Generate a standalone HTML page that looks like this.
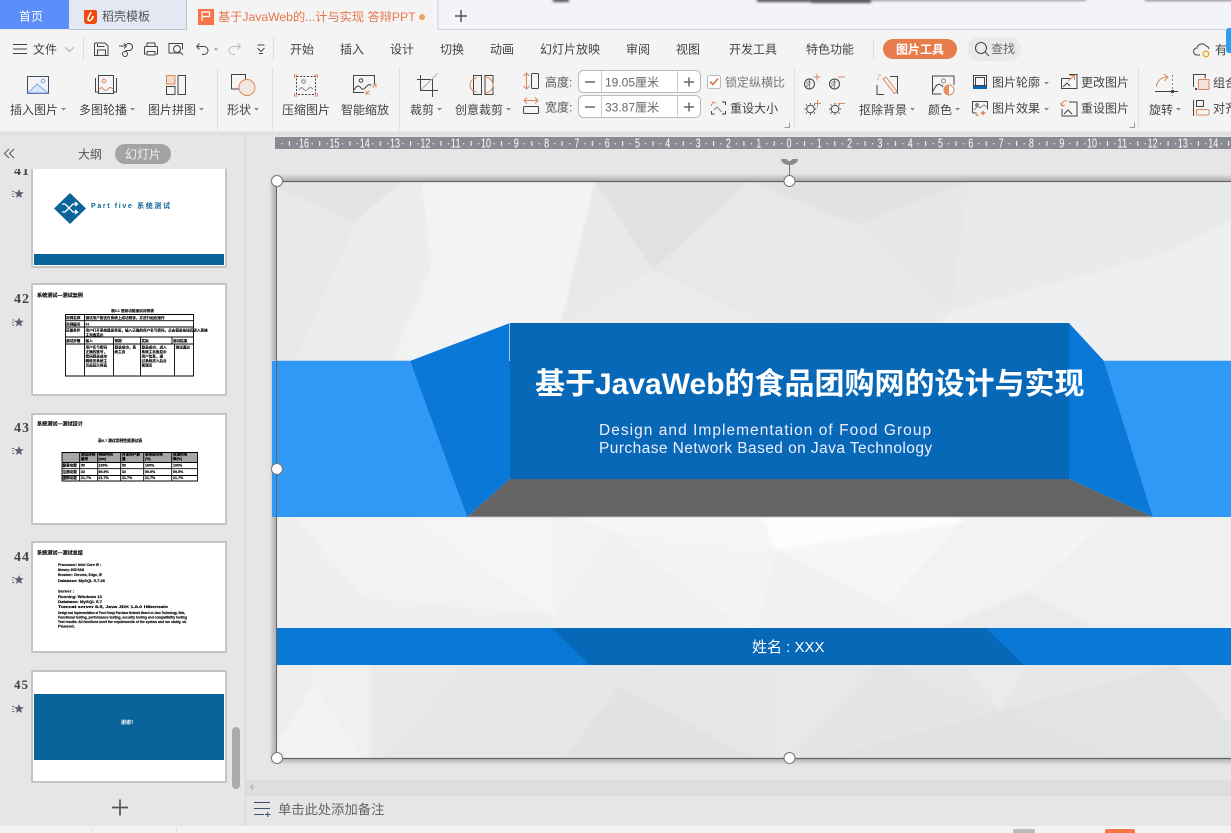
<!DOCTYPE html>
<html><head><meta charset="utf-8"><style>
html,body{margin:0;padding:0;background:#e6e6e6;overflow:hidden;width:1231px;height:833px}
svg{display:block;position:absolute;left:0;top:0}
text{font-family:"Liberation Sans","Noto Sans CJK SC",sans-serif;font-size:12px;fill:#444}
.k{stroke:#444;stroke-width:1;fill:none}
.o{stroke:#d98a5c;stroke-width:1;fill:none}
.g{stroke:#888;stroke-width:1;fill:none}
text.tb{fill:#000;font-size:3.600px;font-weight:bold;stroke:#000;stroke-width:.12}
text.th{fill:#000;font-size:5.100px;font-weight:bold;stroke:#000;stroke-width:.12}
text.t4{fill:#000;font-size:3.600px;font-weight:bold;stroke:#000;stroke-width:.15}
text.rn{fill:#fff;font-size:12.500px;text-anchor:middle}
text.num{font-family:"Liberation Serif",serif;font-size:14px;font-weight:bold;fill:#444;letter-spacing:1px}
.bl{stroke:#000;fill:none;stroke-width:.9}
</style></head><body>
<svg width="1231" height="833" viewBox="0 0 1231 833" xmlns="http://www.w3.org/2000/svg">
<defs>
<pattern id="tick" x="789" y="137" width="30.3" height="12" patternUnits="userSpaceOnUse">
<rect x="15" y="4" width="1" height="5" fill="#fff"/><rect x="7.500" y="6" width="1" height="1.400" fill="#fff"/><rect x="22.500" y="6" width="1" height="1.400" fill="#fff"/>
</pattern>
<filter id="bl" x="-20%" y="-100%" width="140%" height="300%"><feGaussianBlur stdDeviation="1.400"/></filter>
<filter id="bs" x="-5%" y="-5%" width="110%" height="110%"><feGaussianBlur stdDeviation="2"/></filter>
<filter id="soft" x="-2%" y="-2%" width="104%" height="104%"><feGaussianBlur stdDeviation="1.200"/></filter>
<clipPath id="side"><rect x="0" y="169" width="245" height="620"/></clipPath>
<clipPath id="sl"><rect x="276" y="181" width="955" height="577"/></clipPath>
</defs>

<!-- base -->
<rect width="1231" height="833" fill="#e6e6e6"/>
<!-- top chrome -->
<rect width="1231" height="29" fill="#f3f4f9"/>
<g filter="url(#bl)" fill="#555">
<rect x="553" y="-2" width="16" height="4"/><rect x="757" y="-2" width="70" height="4"/><rect x="811" y="-2" width="60" height="5"/><rect x="871" y="-2" width="215" height="3" fill="#999"/><rect x="1145" y="-2" width="90" height="3" fill="#888"/><rect x="280" y="-2" width="16" height="3" fill="#aaa"/>
</g>
<rect x="0" y="0" width="69" height="29" fill="#5b8ef8"/>
<rect x="69" y="0" width="117" height="29" fill="#e3e8f3"/>
<rect x="186" y="0" width="1" height="29" fill="#bcc2d4"/>
<rect x="187" y="0" width="251" height="30" fill="#f4f4f4"/>
<rect x="437.500" y="0" width="1" height="29" fill="#c9cde0"/>
<rect x="438" y="29" width="793" height="1" fill="#cfd2e2"/>
<rect x="69" y="29" width="118" height="1" fill="#bcc2d4"/>
<rect x="0" y="29" width="69" height="1" fill="#e8e8f0"/>
<text x="19" y="20.500" style="fill:#fff">首页</text>
<path d="M84 10h11a2 2 0 0 1 2 2v9a3 3 0 0 1-3 3h-7a3 3 0 0 1-3-3z" fill="#f04a0c"/>
<path d="M91 12c-1 3-3 5-3 7 0 2 2 2 3 1 1-1 2-3 2-4" stroke="#fff" stroke-width="1.500" fill="none"/>
<text x="102" y="20.500" style="fill:#555">稻壳模板</text>
<rect x="198" y="9" width="16" height="16" fill="#f8734b"/>
<path d="M202 21v-9h7.500v4.500h-7.500" stroke="#fff" stroke-width="1.200" fill="none"/>
<text x="218" y="21" style="fill:#e8764c;font-size:12.200px">基于JavaWeb的...计与实现 答辩PPT</text>
<circle cx="422" cy="17" r="3" fill="#eda260"/>
<path d="M461 10v12M455 16h12" stroke="#555" stroke-width="1.500"/>

<!-- ribbon -->
<rect x="0" y="30" width="1231" height="102" fill="#f4f4f4"/>
<rect x="0" y="132" width="1231" height="3" fill="#dcdcdc" filter="url(#bl)"/>
<rect x="0" y="826" width="1231" height="7" fill="#f3f3f3"/>

<!-- quick bar -->
<path d="M13 44.500h14M13 49h14M13 53.500h14" stroke="#444" stroke-width="1"/>
<text x="33" y="53.500">文件</text>
<path d="M65 47l4.500 4.500L74 47" class="g" style="stroke:#aaa"/>
<rect x="83" y="37" width="1" height="24" fill="#ddd"/>
<path d="M95 43h10l3 3v9.500H94.500V44z" class="k"/><path d="M97.500 55v-5h8v5M97.500 44v2.500h7" class="k"/>
<path d="M119 46h5l3 -2M124 43.500l2.500 2.500-2.500 2.500M127 43.500h2a3.500 3.500 0 0 1 0 7h-3v1.500" class="k"/><circle cx="125" cy="54" r="2.500" class="k"/>
<path d="M147 47v-4h8v4M146 54h-1.500v-6.500a1 1 0 0 1 1-1h11a1 1 0 0 1 1 1V54H156" class="k"/><rect x="147" y="51.500" width="8" height="3.500" class="k"/>
<path d="M180 53h-11V43.500h13.500v6" class="k"/><circle cx="177" cy="49" r="3.500" class="k"/><path d="M179.500 51.500l3.500 3.500" class="k"/>
<path d="M196.500 46.500l3-3M196.500 46.500l3 3M197 46.500h7a4 4 0 0 1 0 8h-2" class="k"/>
<path d="M214 48.500h4l-2 2z" fill="#888"/>
<path d="M240.500 46.500l-3-3M240.500 46.500l-3 3M240 46.500h-7a4 4 0 0 0 0 8h2" class="g" style="stroke:#bbb"/>
<path d="M257.500 45h7M257.500 48l3.500 3.500 3.500-3.500M259 53.500h4" class="k"/>
<rect x="273" y="37" width="1" height="24" fill="#ddd"/>
<text x="290" y="53.500">开始</text><text x="340" y="53.500">插入</text><text x="390" y="53.500">设计</text><text x="440" y="53.500">切换</text><text x="490" y="53.500">动画</text><text x="540" y="53.500">幻灯片放映</text><text x="626" y="53.500">审阅</text><text x="676" y="53.500">视图</text><text x="729" y="53.500">开发工具</text><text x="806" y="53.500">特色功能</text>
<rect x="873" y="39" width="1" height="20" fill="#ddd"/>
<rect x="883" y="39" width="74" height="20" rx="10" fill="#e97c4b"/>
<text x="896" y="53.500" style="fill:#fff;font-weight:bold">图片工具</text>
<rect x="967" y="37" width="54" height="24" rx="12" fill="#e9eaec"/>
<circle cx="981" cy="48" r="5.500" class="k"/><path d="M985 52l4 4" class="k"/>
<text x="991" y="53" style="fill:#666">查找</text>
<path d="M1200 55h-3a3.500 3.500 0 0 1 0-7 5 5 0 0 1 9-2 4 4 0 0 1 3 3" class="k"/>
<circle cx="1206" cy="54" r="2.800" fill="none" stroke="#f0a818" stroke-width="1.300"/>
<text x="1215" y="54">有</text>
<rect x="1226" y="28" width="8" height="25" rx="3" fill="#2a9df4"/>

<!-- ribbon dividers -->
<g fill="#e0e0e0"><rect x="217" y="68" width="1" height="62"/><rect x="272" y="68" width="1" height="62"/><rect x="399" y="68" width="1" height="62"/><rect x="794" y="68" width="1" height="62"/><rect x="1138" y="68" width="1" height="62"/></g>

<!-- 插入图片 -->
<rect x="27.500" y="76.500" width="21" height="17" fill="#fff" class="k" style="stroke:#3e4e6e"/>
<path d="M28 93l9-9 11 9z" fill="#d8e6fa" stroke="#7fa6e6"/><circle cx="43" cy="81" r="1.800" fill="none" stroke="#7fa6e6"/>
<!-- 多图轮播 -->
<rect x="98.500" y="75.500" width="15" height="18" class="k"/><path d="M95.500 78v14h3M116.500 78v14h-3" class="k"/><circle cx="104" cy="81" r="1.800" class="o"/><path d="M99 90c2-3 3-3 4.500-1s3 2 4.500 0 3-2 5 0" class="o"/>
<!-- 拼图 -->
<rect x="166.500" y="75.500" width="8.500" height="8.500" fill="#f0dccd" stroke="#d98a5c"/><rect x="166.500" y="86.500" width="8.500" height="8" class="k"/><rect x="178" y="75.500" width="7.500" height="19" class="k"/>
<!-- 形状 -->
<rect x="231.500" y="74.500" width="14" height="14.500" class="k"/><circle cx="247" cy="87.500" r="8" fill="#f3e7df" stroke="#d98a5c"/>
<!-- 压缩 -->
<rect x="296.500" y="76.500" width="19" height="18" class="k" stroke-dasharray="2 1.500"/>
<path d="M294.500 78v-3h3M314.500 75h3v3M294.500 93v3h3M314.500 96h3v-3" class="o"/>
<circle cx="303.500" cy="81.500" r="1.800" class="g"/><path d="M299 90c2-3 3-3 4.500-1s3 2 4.500 0 3-2 5 0" class="g"/>
<!-- 智能缩放 -->
<path d="M364 92.500h-10.500v-17h21v8" class="k"/><circle cx="361" cy="80.500" r="1.800" class="k"/><path d="M354 90c3-5 5-5 7-2s4 0 6-2 3-2 4 0" class="k"/><path d="M366 94l3.500-3.500M366 90.500V94h3.500M376 84l-3.500 3.500M376 87.500V84h-3.500" class="o"/>
<!-- 裁剪 -->
<path d="M417 79.500h15.500V97M420.500 75v15.500H438" class="k"/><path d="M421 90l17-17" class="g" style="stroke:#aaa"/>
<!-- 创意裁剪 -->
<rect x="473.500" y="75.500" width="8" height="19" class="k"/><rect x="485" y="75.500" width="8" height="19" class="k"/><path d="M477 78a7 7 0 0 0 0 14M485 77a8 8 0 0 1 0 16" class="o"/>
<!-- 高度 -->
<path d="M526.500 73v16M523.500 76l3-3 3 3M523.500 86l3 3 3-3" class="o"/><rect x="531.500" y="73.500" width="7" height="15" rx="1" class="k"/>
<text x="545" y="86.500" style="fill:#555">高度:</text>
<path d="M524 100.500h14M527 97.500l-3 3 3 3M535 97.500l3 3-3 3" class="o"/><rect x="523.500" y="106.500" width="15" height="7" rx="1" class="k"/>
<text x="545" y="111.500" style="fill:#555">宽度:</text>
<!-- inputs -->
<g fill="#fff" stroke="#bbb"><rect x="578.500" y="70.500" width="122" height="22" rx="5"/><rect x="578.500" y="95.500" width="122" height="22" rx="5"/></g>
<path d="M601.500 71v21M677.500 71v21M601.500 96v21M677.500 96v21" stroke="#ccc"/>
<path d="M585 82h10M684 82h10M689 77.500v9M585 107h10M684 107h10M689 102.500v9" stroke="#666" stroke-width="1.500"/>
<text x="605" y="86.500" style="fill:#666">19.05厘米</text><text x="605" y="111.500" style="fill:#666">33.87厘米</text>
<!-- lock -->
<rect x="707.500" y="75.500" width="13" height="13" rx="2" fill="#fff" stroke="#bbb"/><path d="M710 81.500l3 3 5-6" stroke="#d4753e" stroke-width="1.600" fill="none"/>
<text x="725" y="86.500" style="fill:#777">锁定纵横比</text>
<!-- reset -->
<path d="M711.500 111v3h3M722 114h3.500v-3M725.500 105v-3H722" class="k"/><path d="M711 106l2-4 3 1M714 112" class="o"/><path d="M714 110l3-3 2 2 3 3" class="g"/>
<text x="730" y="112.500">重设大小</text>
<path d="M784.500 127.500h5v-5" class="g" style="stroke:#999"/>
<!-- brightness / contrast -->
<circle cx="809.500" cy="84" r="5" class="k"/><path d="M809.500 79.500v9M806 87l5-5M806 84l3-3" class="k" style="stroke:#888"/><path d="M817 73.500v7M813.500 77h7" class="o"/>
<circle cx="834.500" cy="84" r="5" class="k"/><path d="M834.500 79.500v9M831 87l5-5M831 84l3-3" class="k" style="stroke:#888"/><path d="M838 77h7" class="o"/>
<circle cx="810.500" cy="109" r="3.800" class="k"/><path d="M810.500 103v1.500M810.500 113.500v1.500M804.500 109h1.500M815 109h1.500M806 104.500l1 1M814 112.500l1 1M806 113.500l1-1M814 105.500l1-1" class="k"/><path d="M817.500 100v7M814 103.500h7" class="o"/>
<circle cx="835" cy="109" r="3.800" class="k"/><path d="M835 103v1.500M835 113.500v1.500M829 109h1.500M839.500 109h1.500M830.500 104.500l1 1M838.500 112.500l1 1M830.500 113.500l1-1M838.500 105.500l1-1" class="k"/><path d="M838 103.500h7" class="o"/>
<!-- 抠除背景 -->
<path d="M877 85v9.500h7M890 76.500h7.500V94" class="k"/><path d="M883 79l3-2 11 14.500-2.500 2z" class="o"/><path d="M878 76l1 1M880 74v2M877 79h2" class="g" style="stroke:#aaa"/>
<text x="859" y="114">抠除背景</text><text x="928" y="114">颜色</text>
<!-- 颜色 -->
<path d="M944 76H932.500v18h9M944 76h10v9" class="k"/><circle cx="943.500" cy="81" r="2" class="k" style="stroke:#888"/><path d="M933 91c3-6 5-8 8-6l2 2" class="k"/><circle cx="949" cy="90" r="5" fill="#fff" stroke="#d98a5c"/><path d="M949 85a5 5 0 0 0 0 10z" fill="#e48f61"/>
<!-- 图片轮廓 -->
<rect x="973.500" y="75.500" width="13" height="10" class="k"/><path d="M975.500 85v-7.500h9V85" class="k"/><rect x="973" y="86" width="14" height="3" fill="#0b67b5"/>
<text x="992" y="86.500">图片轮廓</text>
<!-- 图片效果 -->
<path d="M972.500 113v-11.500h15v8M972.500 113h4" class="k"/><circle cx="977" cy="105" r="1.200" class="k"/><path d="M974 110l4-4 2 2 4-3 3 2" class="g"/><path d="M983 110l1 2 2 1-2 1-1 2-1-2-2-1 2-1zM977 113l.6 1.400 1.400.6-1.400.6-.6 1.400-.6-1.400-1.400-.6 1.400-.6z" fill="#d98a5c"/>
<text x="992" y="112.500">图片效果</text>
<!-- 更改图片 -->
<path d="M1061.500 78.500h9M1061.500 78.500v10h15.500v-14h-8" class="k"/><path d="M1063 87l4-4 3 3" class="k"/><path d="M1068 81l6-5M1070 75.500h4.500v4.500" class="o"/>
<text x="1081" y="86.500">更改图片</text>
<!-- 重设图片 -->
<path d="M1069 102h8v14h-15v-7" class="k"/><path d="M1064 114l4-4 4 4" class="k"/><path d="M1062 106a4 4 0 0 1 5-5M1060.500 103l1.500 3 3-1" class="o"/>
<text x="1081" y="112.500">重设图片</text>
<path d="M1129.500 127.500h5v-5" class="g" style="stroke:#999"/>
<!-- 旋转 -->
<path d="M1156.500 87c0-6 5-10 11-10M1163.500 74l4.500 3-3.500 4" class="o"/><path d="M1155 91.500h23" class="k"/><path d="M1172.500 75v21" class="g" stroke-dasharray="2 2"/><rect x="1171" y="90" width="3" height="3" fill="#444"/>
<text x="1149" y="114">旋转</text>
<!-- 组合 -->
<path d="M1193.500 87v-12.500h12v4" class="k"/><rect x="1198.500" y="79.500" width="10.500" height="10" fill="#f2e2d7" stroke="#d98a5c"/><rect x="1195" y="88" width="2" height="2" fill="#444"/><rect x="1204" y="76" width="2" height="2" fill="#d98a5c"/>
<text x="1213" y="87">组合</text>
<path d="M1193.500 100v16" class="k"/><rect x="1196.500" y="100.500" width="7" height="6" class="k"/><rect x="1196.500" y="109.500" width="12.500" height="5.500" rx="1" class="o"/>
<text x="1213" y="112.500">对齐</text>

<!-- ribbon labels -->
<text x="10" y="114">插入图片</text><text x="79" y="114">多图轮播</text><text x="148" y="114">图片拼图</text><text x="227" y="114">形状</text><text x="282" y="114">压缩图片</text><text x="341" y="114">智能缩放</text><text x="410" y="114">裁剪</text><text x="455" y="114">创意裁剪</text>
<g fill="#888"><path d="M61 108h5l-2.500 2.500zM130 108h5l-2.500 2.500zM199 108h5l-2.500 2.500zM254 108h5l-2.500 2.500zM437 108h5l-2.500 2.500zM506 108h5l-2.500 2.500zM910 108h5l-2.500 2.500zM955 108h5l-2.500 2.500zM1044 82h5l-2.500 2.500zM1044 108h5l-2.500 2.500zM1176 108h5l-2.500 2.500z"/></g>

<!-- ruler -->
<rect x="275" y="137" width="956" height="12" fill="#8a8a92"/>
<rect x="275" y="137" width="956" height="12" fill="url(#tick)"/>
<g>
<text class="rn" x="304" y="147.500" textLength="10" lengthAdjust="spacingAndGlyphs">16</text>
<text class="rn" x="334.500" y="147.500" textLength="10" lengthAdjust="spacingAndGlyphs">15</text>
<text class="rn" x="364.800" y="147.500" textLength="10" lengthAdjust="spacingAndGlyphs">14</text>
<text class="rn" x="395" y="147.500" textLength="10" lengthAdjust="spacingAndGlyphs">13</text>
<text class="rn" x="425.400" y="147.500" textLength="10" lengthAdjust="spacingAndGlyphs">12</text>
<text class="rn" x="455.700" y="147.500" textLength="10" lengthAdjust="spacingAndGlyphs">11</text>
<text class="rn" x="486" y="147.500" textLength="10" lengthAdjust="spacingAndGlyphs">10</text>
<text class="rn" x="516.300" y="147.500" textLength="5" lengthAdjust="spacingAndGlyphs">9</text>
<text class="rn" x="546.600" y="147.500" textLength="5" lengthAdjust="spacingAndGlyphs">8</text>
<text class="rn" x="576.900" y="147.500" textLength="5" lengthAdjust="spacingAndGlyphs">7</text>
<text class="rn" x="607.200" y="147.500" textLength="5" lengthAdjust="spacingAndGlyphs">6</text>
<text class="rn" x="637.500" y="147.500" textLength="5" lengthAdjust="spacingAndGlyphs">5</text>
<text class="rn" x="667.800" y="147.500" textLength="5" lengthAdjust="spacingAndGlyphs">4</text>
<text class="rn" x="698.100" y="147.500" textLength="5" lengthAdjust="spacingAndGlyphs">3</text>
<text class="rn" x="728.400" y="147.500" textLength="5" lengthAdjust="spacingAndGlyphs">2</text>
<text class="rn" x="758.700" y="147.500" textLength="5" lengthAdjust="spacingAndGlyphs">1</text>
<text class="rn" x="789" y="147.500" textLength="5" lengthAdjust="spacingAndGlyphs">0</text>
<text class="rn" x="819.300" y="147.500" textLength="5" lengthAdjust="spacingAndGlyphs">1</text>
<text class="rn" x="849.600" y="147.500" textLength="5" lengthAdjust="spacingAndGlyphs">2</text>
<text class="rn" x="879.900" y="147.500" textLength="5" lengthAdjust="spacingAndGlyphs">3</text>
<text class="rn" x="910.200" y="147.500" textLength="5" lengthAdjust="spacingAndGlyphs">4</text>
<text class="rn" x="940.500" y="147.500" textLength="5" lengthAdjust="spacingAndGlyphs">5</text>
<text class="rn" x="970.800" y="147.500" textLength="5" lengthAdjust="spacingAndGlyphs">6</text>
<text class="rn" x="1001.100" y="147.500" textLength="5" lengthAdjust="spacingAndGlyphs">7</text>
<text class="rn" x="1031.400" y="147.500" textLength="5" lengthAdjust="spacingAndGlyphs">8</text>
<text class="rn" x="1061.700" y="147.500" textLength="5" lengthAdjust="spacingAndGlyphs">9</text>
<text class="rn" x="1092" y="147.500" textLength="10" lengthAdjust="spacingAndGlyphs">10</text>
<text class="rn" x="1122.300" y="147.500" textLength="10" lengthAdjust="spacingAndGlyphs">11</text>
<text class="rn" x="1152.600" y="147.500" textLength="10" lengthAdjust="spacingAndGlyphs">12</text>
<text class="rn" x="1182.900" y="147.500" textLength="10" lengthAdjust="spacingAndGlyphs">13</text>
<text class="rn" x="1213.200" y="147.500" textLength="10" lengthAdjust="spacingAndGlyphs">14</text>
</g>

<!-- sidebar -->
<rect x="245" y="133" width="1" height="693" fill="#d8d8d8"/>
<path d="M9 149l-4.500 4.500L9 158M14 149l-4.500 4.500L14 158" stroke="#555" fill="none"/>
<text x="78" y="158.500" style="fill:#555">大纲</text>
<rect x="115" y="144" width="56" height="20" rx="10" fill="#a3a3a3"/>
<text x="125" y="158.500" style="fill:#f0f0f0">幻灯片</text>

<g clip-path="url(#side)">
<!-- 41 -->
<rect x="32" y="150" width="194" height="117" rx="1" fill="#fff" stroke="#c4c4c4" stroke-width="2"/>
<rect x="34" y="254" width="190" height="11" fill="#0a649c"/>
<path d="M70 193l16 15.500-16 15.500-16-15.500z" fill="#0a649c"/>
<path d="M62 204h3l8 8h4M62 212h3l8-8h4M75 202l2.500 2-2.500 2M75 210l2.500 2-2.500 2" stroke="#fff" stroke-width="1.300" fill="none"/>
<text x="91" y="208" style="fill:#0a649c;font-size:7px;letter-spacing:1.650px;font-weight:bold">Part five 系统测试</text>
<text class="num" x="14" y="175">41</text>
</g>
<!-- 42 -->
<rect x="32" y="284" width="194" height="111" rx="1" fill="#fff" stroke="#c4c4c4" stroke-width="2"/>
<text x="37" y="297" class="th">系统测试—测试案例</text>
<text x="111" y="312" class="tb" style="font-size:3.700px">表5.1 登录功能测试用例表</text>
<path d="M65.500 314.500H193.500V376H65.500zM65.500 320.700H193.500M65.500 327H193.500M65.500 337H193.500M65.500 344H193.500M84.500 314.500V376M113.500 337V376M140.500 337V376M174.500 344V376M172 337v7" class="bl"/>
<text x="66" y="319" class="tb">用例名称</text><text x="85.500" y="319" class="tb">测试用户能否在系统上成功登录，并进行相应操作</text>
<text x="66" y="325.500" class="tb">用例编号</text><text x="85.500" y="325.500" class="tb">01</text>
<text x="66" y="331.500" class="tb">前置条件</text><text x="85.500" y="331.500" class="tb">用户打开系统登录界面，输入正确的用户名与密码，点击登录按钮后进入系统</text><text x="85.500" y="336" class="tb">主页面显示</text>
<text x="66" y="342" class="tb">测试步骤</text><text x="85.500" y="342" class="tb">输入</text><text x="114.500" y="342" class="tb">预期</text><text x="141.500" y="342" class="tb">实际</text><text x="173" y="342" class="tb">测试结果</text>
<text x="85.500" y="348.500" class="tb">用户名与密码</text><text x="85.500" y="353" class="tb">正确的账号，</text><text x="85.500" y="357.500" class="tb">密码登录成功</text><text x="85.500" y="362" class="tb">跳转至系统主</text><text x="85.500" y="366.500" class="tb">页面显示界面</text>
<text x="114.500" y="348.500" class="tb">登录成功，系</text><text x="114.500" y="353" class="tb">统主页</text>
<text x="141.500" y="348.500" class="tb">登录成功，进入</text><text x="141.500" y="353" class="tb">系统主页面显示</text><text x="141.500" y="357.500" class="tb">用户信息，通</text><text x="141.500" y="362" class="tb">过系统进入后台</text><text x="141.500" y="366.500" class="tb">管理页</text>
<text x="175.500" y="348.500" class="tb">测试通过</text>
<!-- 43 -->
<rect x="32" y="414" width="194" height="110" rx="1" fill="#fff" stroke="#c4c4c4" stroke-width="2"/>
<text x="37" y="425.500" class="th">系统测试—测试设计</text>
<text x="98" y="442" class="tb" style="font-size:3.800px">表5.7 测试用例性能测试表</text>
<rect x="62" y="452.500" width="135.500" height="10" fill="#a6a6a6"/>
<path d="M62 452.500H197.500V481H62zM62 462.500H197.500M62 468.700H197.500M62 475.500H197.500M79.700 452.500V481M97.700 452.500V481M120.700 452.500V481M143.700 452.500V481M171.700 452.500V481" class="bl"/>
<g><text class="t4" x="81" y="455.500">测试用例</text><text class="t4" x="81" y="460">编号</text><text class="t4" x="98.500" y="455.500">响应时间</text><text class="t4" x="98.500" y="460">(ms)</text><text class="t4" x="122" y="455.500">并发用户数</text><text class="t4" x="122" y="460">量</text><text class="t4" x="145" y="455.500">事务成功率</text><text class="t4" x="145" y="460">(%)</text><text class="t4" x="173" y="455.500">资源利用</text><text class="t4" x="173" y="460">率(%)</text>
<text class="t4" x="62.500" y="466.500">登录功能</text><text class="t4" x="81" y="466.500">50</text><text class="t4" x="98.500" y="466.500">100%</text><text class="t4" x="122" y="466.500">50</text><text class="t4" x="145" y="466.500">100%</text><text class="t4" x="173" y="466.500">100%</text>
<text class="t4" x="62.500" y="473">注册功能</text><text class="t4" x="81" y="473">32</text><text class="t4" x="98.500" y="473">99.9%</text><text class="t4" x="122" y="473">32</text><text class="t4" x="145" y="473">99.9%</text><text class="t4" x="173" y="473">99.9%</text>
<text class="t4" x="62.500" y="479">团购功能</text><text class="t4" x="81" y="479">21.7%</text><text class="t4" x="98.500" y="479">21.7%</text><text class="t4" x="122" y="479">21.7%</text><text class="t4" x="145" y="479">21.7%</text><text class="t4" x="173" y="479">21.7%</text></g>
<!-- 44 -->
<rect x="32" y="542" width="194" height="110" rx="1" fill="#fff" stroke="#c4c4c4" stroke-width="2"/>
<text x="37" y="554.500" class="th">系统测试—测试总结</text>
<text class="t4" x="58" y="566" textLength="43" lengthAdjust="spacingAndGlyphs">Processor: Intel Core i5 :</text>
<text class="t4" x="58" y="571" textLength="26" lengthAdjust="spacingAndGlyphs">Memory: 8GB RAM</text>
<text class="t4" x="58" y="576" textLength="44" lengthAdjust="spacingAndGlyphs">Browser: Chrome, Edge, IE</text>
<text class="t4" x="58" y="582" textLength="47" lengthAdjust="spacingAndGlyphs">Database: MySQL 5.7.26</text>
<text class="t4" x="58" y="592.500" textLength="16" lengthAdjust="spacingAndGlyphs">Server :</text>
<text class="t4" x="58" y="598" textLength="44" lengthAdjust="spacingAndGlyphs">Running: Windows 10</text>
<text class="t4" x="58" y="603" textLength="44" lengthAdjust="spacingAndGlyphs">Database: MySQL 5.7</text>
<text class="t4" x="58" y="608" textLength="110" lengthAdjust="spacingAndGlyphs">Tomcat server 8.5, Java JDK 1.8.0 Hibernate</text>
<text class="t4" x="58" y="614" textLength="127" lengthAdjust="spacingAndGlyphs">Design and Implementation of Food Group Purchase Network Based on Java Technology, Web,</text>
<text class="t4" x="58" y="618.500" textLength="129" lengthAdjust="spacingAndGlyphs">Functional testing, performance testing, security testing and compatibility testing</text>
<text class="t4" x="58" y="623" textLength="129" lengthAdjust="spacingAndGlyphs">Test results: All functions meet the requirements of the system and run stably, ok.</text>
<text class="t4" x="58" y="627.500" textLength="17" lengthAdjust="spacingAndGlyphs">Passed.</text>
<!-- 45 -->
<rect x="32" y="671" width="194" height="111" rx="1" fill="#fff" stroke="#c4c4c4" stroke-width="2"/>
<rect x="34" y="694" width="190" height="66" fill="#0a649c"/>
<text x="121" y="724" style="fill:#fff;font-size:5px;font-weight:bold">谢谢！</text>

<!-- numbers and stars -->
<text class="num" x="14" y="303">42</text>
<text class="num" x="14" y="432">43</text>
<text class="num" x="14" y="561">44</text>
<text class="num" x="14" y="689" style="font-size:13px">45</text>
<g fill="#5a6270">
<path d="M19 189l1.300 3.100 3.400.3-2.600 2.200.8 3.300-2.900-1.800-2.900 1.800.8-3.300-2.600-2.200 3.400-.3z"/>
<path d="M12 191.500h2.500M12 194h1.500M12 196.500h2.500" stroke="#5a6270" stroke-width=".8"/>
<g transform="translate(0,128.500)"><path d="M19 189l1.300 3.100 3.400.3-2.600 2.200.8 3.300-2.900-1.800-2.900 1.800.8-3.300-2.600-2.200 3.400-.3z"/><path d="M12 191.500h2.500M12 194h1.500M12 196.500h2.500" stroke="#5a6270" stroke-width=".8"/></g>
<g transform="translate(0,257)"><path d="M19 189l1.300 3.100 3.400.3-2.600 2.200.8 3.300-2.900-1.800-2.900 1.800.8-3.300-2.600-2.200 3.400-.3z"/><path d="M12 191.500h2.500M12 194h1.500M12 196.500h2.500" stroke="#5a6270" stroke-width=".8"/></g>
<g transform="translate(0,386)"><path d="M19 189l1.300 3.100 3.400.3-2.600 2.200.8 3.300-2.900-1.800-2.900 1.800.8-3.300-2.600-2.200 3.400-.3z"/><path d="M12 191.500h2.500M12 194h1.500M12 196.500h2.500" stroke="#5a6270" stroke-width=".8"/></g>
<g transform="translate(0,515)"><path d="M19 189l1.300 3.100 3.400.3-2.600 2.200.8 3.300-2.900-1.800-2.900 1.800.8-3.300-2.600-2.200 3.400-.3z"/><path d="M12 191.500h2.500M12 194h1.500M12 196.500h2.500" stroke="#5a6270" stroke-width=".8"/></g>
</g>
<rect x="232" y="727" width="8" height="62" rx="4" fill="#ababab"/>
<path d="M120 799.500v16M112 807.500h16" stroke="#555" stroke-width="1.700"/>

<!-- hscroll & notes -->
<rect x="246" y="780" width="985" height="15" fill="#dedede"/>
<rect x="246" y="794.500" width="985" height="1" fill="#d6d6d6"/>
<path d="M253 783.500v7l-3.500-3.500z" fill="#bbb"/>
<path d="M254 802.500h16M254 808.500h16M254 814.500h10M265 814.500h5.500M267.700 812v5" stroke="#3e4e6e" stroke-width="1"/>
<text x="278" y="814" style="font-size:13.300px;fill:#666">单击此处添加备注</text>

<!-- status bits -->
<rect x="92" y="828" width="1" height="5" fill="#ddd"/><rect x="176" y="828" width="1" height="5" fill="#ddd"/>
<path d="M1013 833v-2a2 2 0 0 1 2-2h18a2 2 0 0 1 2 2v2z" fill="#bcbcbc"/>
<path d="M1105 833v-2a2 2 0 0 1 2-2h26a2 2 0 0 1 2 2v2z" fill="#f8734b"/>

<!-- slide -->
<rect x="272" y="177" width="965" height="585" fill="#777" opacity=".45" filter="url(#bs)"/>
<g clip-path="url(#sl)">
<rect x="276" y="181" width="955" height="577" fill="#eaebec"/>
<g filter="url(#soft)">
<rect x="260" y="165" width="985" height="200" fill="#e9eaeb"/>
<path d="M260 165H420L356 222 260 181z" fill="#e3e4e4"/>
<path d="M260 181L356 222 296 361H260z" fill="#e8e9e9"/>
<path d="M356 222L420 165 430 267 391 361H296z" fill="#ebecec"/>
<path d="M420 165H600L595 181 430 267z" fill="#f2f3f3"/>
<path d="M430 267L595 181 561 323 540 361H450z" fill="#f3f4f5"/>
<path d="M430 267L391 361H450z" fill="#f1f2f2"/>
<path d="M595 181L653 270 561 323z" fill="#e8e9ea"/>
<path d="M595 165H749V181L653 270 595 181z" fill="#e0e1e2"/>
<path d="M653 270L749 181 770 323z" fill="#e7e8e9"/>
<path d="M749 181L856 225 770 323z" fill="#e8e9ea"/>
<path d="M749 165H970V181L856 225 749 181z" fill="#e1e2e2"/>
<path d="M856 225L970 181 950 312z" fill="#e6e7e7"/>
<path d="M856 225L950 312 770 330z" fill="#e8e9e9"/>
<path d="M653 270L770 330H561z" fill="#ebecec"/>
<path d="M970 165H1245V213L1166 253 950 312 970 181z" fill="#e9eaeb"/>
<path d="M950 312L1166 253 1245 213V365H900z" fill="#eeeff0"/>
<rect x="260" y="510" width="985" height="125" fill="#f2f3f4"/>
<path d="M290 510H400L364 598z" fill="#f3f3f3"/>
<path d="M260 510H290L364 598 340 635H260z" fill="#eeefef"/>
<path d="M364 598L553 616V635H340z" fill="#eeefef"/>
<path d="M400 517L553 616 364 598z" fill="#f1f2f3"/>
<path d="M400 510H550L553 616z" fill="#f5f5f5"/>
<path d="M550 510H758L776 550 610 530z" fill="#f5f6f6"/>
<path d="M553 616L610 530 755 635H553z" fill="#f0f1f2"/>
<path d="M610 530L776 550 755 635z" fill="#f3f4f4"/>
<path d="M758 510H961V523L776 550z" fill="#fcfdfd"/>
<path d="M776 550L961 523 887 605z" fill="#f6f6f7"/>
<path d="M776 550L887 605 927 635H755z" fill="#f1f1f2"/>
<path d="M961 523L1026 592 927 635 887 605z" fill="#f2f2f3"/>
<path d="M961 510H1121L1026 592 961 523z" fill="#f4f4f4"/>
<path d="M1026 592L1109 635H927z" fill="#ebebeb"/>
<path d="M1121 510H1245V635H1109L1026 592z" fill="#f0f0f1"/>
<rect x="260" y="658" width="985" height="115" fill="#e6e7e7"/>
<path d="M260 658H300L314 683 260 770z" fill="#ecedee"/>
<path d="M314 683L370 770H260z" fill="#f2f3f3"/>
<path d="M300 658H370V770L314 683z" fill="#f0f0f0"/>
<path d="M370 658H470L370 770z" fill="#eaeaea"/>
<path d="M470 658H553L555 770H370z" fill="#e6e7e7"/>
<path d="M619 686L776 770H555z" fill="#e1e2e1"/>
<path d="M553 658H600L619 686 555 770z" fill="#e6e7e7"/>
<path d="M619 686L660 658H770L776 770z" fill="#e5e6e6"/>
<path d="M776 658H880L776 770z" fill="#e8e8e8"/>
<path d="M880 658L999 711 776 770z" fill="#e4e5e5"/>
<path d="M776 770L999 711 1152 770z" fill="#e1e2e2"/>
<path d="M960 658L1000 711 1030 658z" fill="#eaebeb"/>
<path d="M999 711L1177 665 1245 740V770H1152z" fill="#e2e3e3"/>
<path d="M1177 658H1245V740z" fill="#e9e9ea"/>
</g>
<rect x="276" y="628" width="955" height="37" fill="#0a78d6"/>
<path d="M552 628H986L1024 665H590z" fill="#0868b8"/>
</g>
<!-- main banner -->
<path d="M272 361H410L467 517H272z" fill="#3099f5"/>
<path d="M1104 361H1231V517H1153z" fill="#3099f5"/>
<path d="M272 360.500H410M1104 360.500H1231" stroke="#bcd4ec"/>
<path d="M510 479H1069L1153 517H467z" fill="#646464"/>
<path d="M467 516.800H1153" stroke="#999"/>
<path d="M410 361L510 323V479L467 517z" fill="#0a78d6"/>
<path d="M1069 323L1104 361 1153 517 1069 479z" fill="#0a78d6"/>
<rect x="510" y="323" width="559" height="156" fill="#0868b8"/>
<path d="M509.500 323V361" stroke="#a8c8e8"/>
<text x="535" y="394" style="font-size:30px;font-weight:bold;fill:#fff">基于JavaWeb的食品团购网的设计与实现</text>
<text x="599" y="435" style="font-size:15.500px;fill:#eef;letter-spacing:1.030px">Design and Implementation of Food Group</text>
<text x="599" y="453" style="font-size:15.500px;fill:#eef;letter-spacing:.43px">Purchase Network Based on Java Technology</text>
<text x="752" y="652" style="font-size:15px;fill:#fff">姓名 : XXX</text>

<!-- selection -->
<path d="M276 181.500H1231M276 758.500H1231" stroke="#666" stroke-width="1.200"/>
<path d="M276.500 181V758" stroke="#666" stroke-width="1"/>
<path d="M789.500 164V176" stroke="#777"/>
<path d="M781 159h17a8.500 6 0 0 1-17 0z" fill="#8a8a8a"/>
<path d="M787 159h5a2.500 2 0 0 1-5 0z" fill="#e6e6e6"/>
<g fill="#fff" stroke="#777" stroke-width="1">
<circle cx="277" cy="181" r="5.500"/><circle cx="789.500" cy="181" r="5.500"/><circle cx="277" cy="469" r="5.500"/><circle cx="277" cy="758" r="5.500"/><circle cx="789.500" cy="758" r="5.500"/>
</g>
</svg>
</body></html>
